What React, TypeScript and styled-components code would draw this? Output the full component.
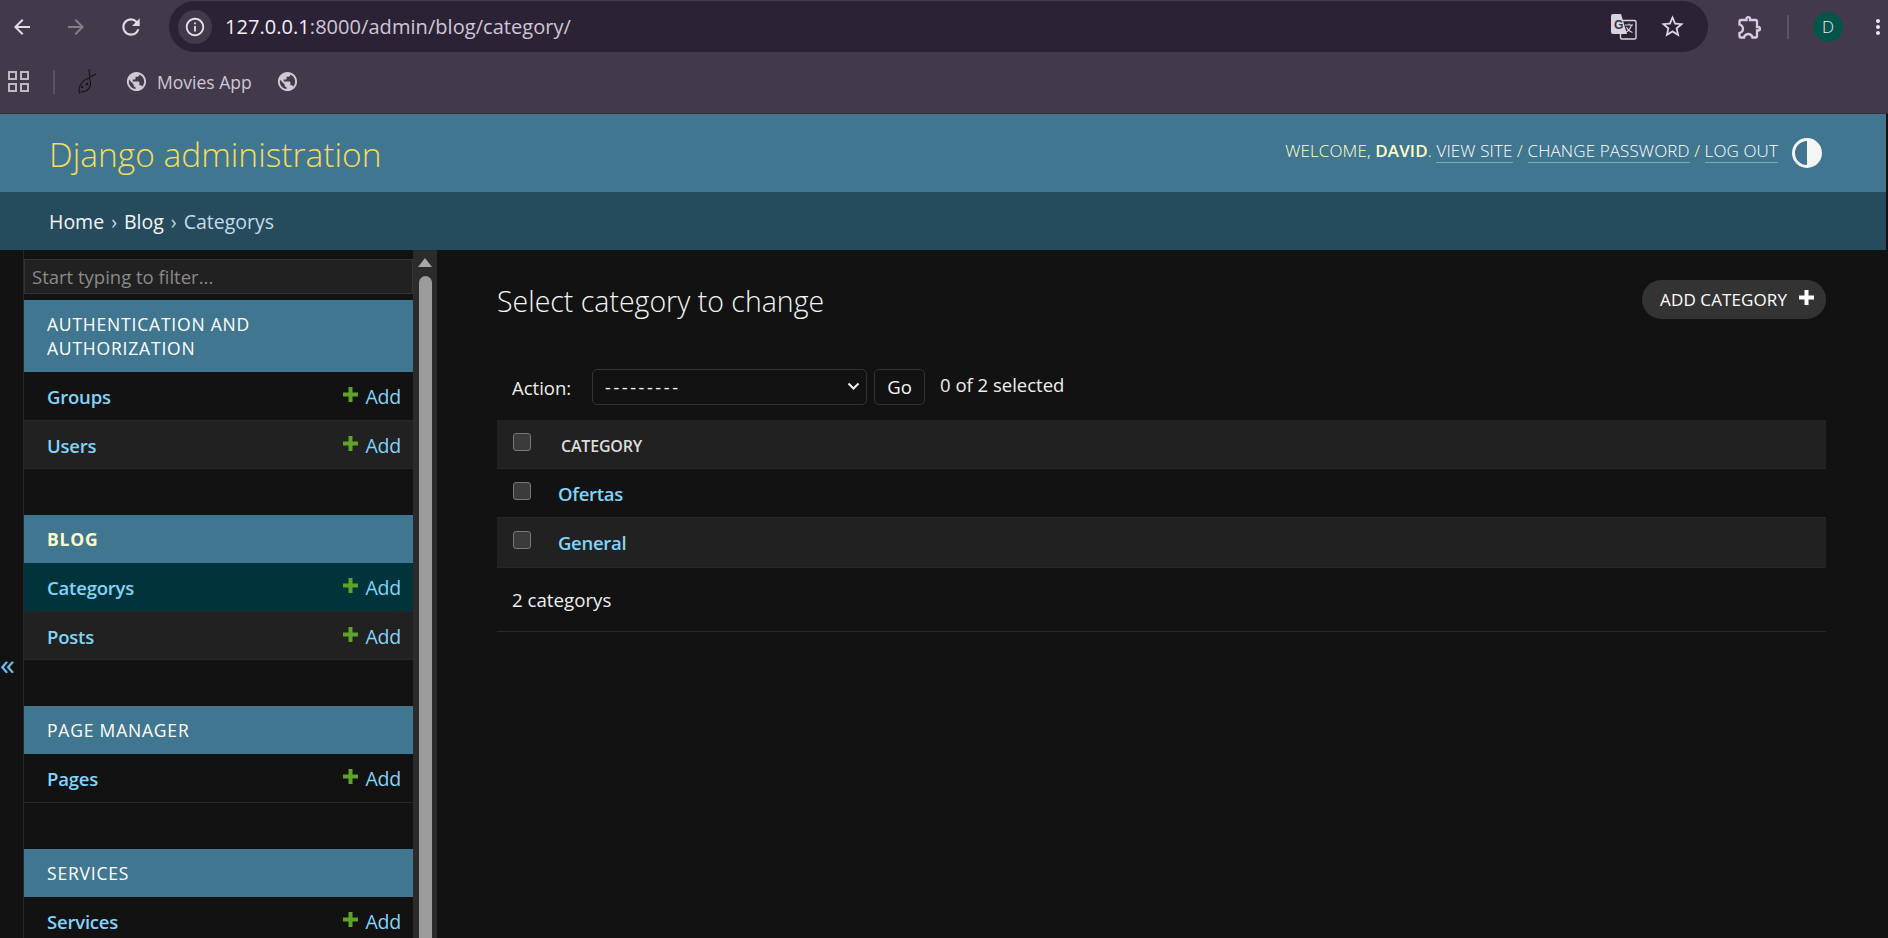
import React from "react";
import styled, { createGlobalStyle } from "styled-components";
import {
  MdArrowBack,
  MdArrowForward,
  MdRefresh,
  MdInfoOutline,
  MdStarBorder,
  MdOutlineExtension,
  MdMoreVert,
  MdPublic,
} from "react-icons/md";

const FONT = `"Open Sans", "Noto Sans", "Liberation Sans", sans-serif`;

const Global = createGlobalStyle`
  html, body { margin: 0; padding: 0; height: 100%; background: #121212; overflow: hidden; }
  #root { height: 100%; }
  * { box-sizing: border-box; }
  body { font-family: ${FONT}; }
`;

const Page = styled.div`
  width: 1888px;
  height: 938px;
  display: flex;
  flex-direction: column;
  overflow: hidden;
  background: #121212;
  color: #f5f5f5;
`;

/* ---- browser chrome ---- */
const Chrome = styled.div`
  height: 114px;
  flex: none;
  background: #423a4b;
  border-bottom: 1px solid #35303c;
  display: flex;
  flex-direction: column;
`;
const TopRow = styled.div`
  height: 53px;
  flex: none;
  display: flex;
  align-items: center;
  padding-left: 10px;
`;
const NavIcon = styled.span<{ $dim?: boolean; $w?: number }>`
  width: ${(p) => p.$w ?? 54}px;
  flex: none;
  display: flex;
  align-items: center;
  justify-content: flex-start;
  color: ${(p) => (p.$dim ? "#857c8c" : "#e3dae9")};
`;
const AddressBar = styled.div`
  margin-left: 11px;
  width: 1539px;
  height: 51px;
  flex: none;
  border-radius: 26px;
  background: #2b2335;
  display: flex;
  align-items: center;
  padding: 0 14px 0 9px;
`;
const InfoBubble = styled.span`
  width: 34px;
  height: 34px;
  border-radius: 50%;
  background: #423a4b;
  color: #e6deeb;
  display: flex;
  align-items: center;
  justify-content: center;
  flex: none;
`;
const Url = styled.span`
  margin-left: 13px;
  font-size: 20px;
  letter-spacing: 0.05px;
  color: #cfc6d6;
  flex: 1;
  b {
    font-weight: 400;
    color: #f4eef8;
  }
`;
const BarIcons = styled.span`
  display: flex;
  align-items: center;
  gap: 22px;
  color: #ddd4e3;
  margin-right: 8px;
`;
const ToolIcons = styled.div`
  display: flex;
  align-items: center;
  margin-left: 28px;
  color: #d8c9e4;
`;
const ToolSep = styled.span`
  width: 2px;
  height: 24px;
  margin: 0 24px 0 23px;
  background: #5b5264;
`;
const Avatar = styled.span`
  width: 30px;
  height: 30px;
  border-radius: 50%;
  background: #05544a;
  color: #eef;
  font-size: 17px;
  font-weight: 300;
  display: flex;
  align-items: center;
  justify-content: center;
  flex: none;
`;
const MenuDots = styled.span`
  display: flex;
  margin-left: 23px;
  color: #efe6f5;
`;
const BookmarkRow = styled.div`
  flex: 1;
  display: flex;
  align-items: center;
  padding: 0 0 3px 8px;
  color: #bfb9c6;
`;
const BarSep = styled.span`
  width: 2px;
  height: 24px;
  margin: 0 21px 0 24px;
  background: #5b5264;
`;
const Bookmark = styled.span<{ $lead?: number }>`
  display: flex;
  align-items: center;
  gap: 9px;
  font-size: 17.5px;
  color: #cfc8d6;
  margin-left: ${(p) => p.$lead ?? 27}px;
`;

/* ---- django header ---- */
const Header = styled.header`
  height: 78px;
  flex: none;
  background: #417690;
  display: flex;
  align-items: center;
  justify-content: space-between;
  padding: 0 64px 0 49px;
  margin-right: 2px;
`;
const Brand = styled.h1`
  margin: 2px 0 0;
  font-size: 33.5px;
  font-weight: 300;
  color: #f5dd5d;
`;
const UserTools = styled.div`
  display: flex;
  align-items: center;
  gap: 14px;
  font-size: 17px;
  font-weight: 300;
  letter-spacing: 0.12px;
  color: #ffc;
  text-transform: uppercase;
  strong {
    font-weight: 600;
  }
`;
const ToolsText = styled.span`
  padding-bottom: 5px;
`;
const ToolLink = styled.a`
  color: #fff;
  border-bottom: 1px solid rgba(255, 255, 255, 0.35);
`;
const Breadcrumbs = styled.nav`
  height: 58px;
  flex: none;
  background: #264b5d;
  display: flex;
  align-items: center;
  padding: 1px 0 0 49px;
  margin-right: 2px;
  font-size: 19.5px;
  color: #c4dce8;
  a {
    color: #f5f5f5;
  }
  i {
    font-style: normal;
    margin: 0 7px;
  }
`;

/* ---- body ---- */
const Body = styled.div`
  flex: 1;
  min-height: 0;
  display: flex;
`;
const ToggleColumn = styled.div`
  width: 24px;
  flex: none;
  padding-top: 396px;
  border-right: 1px solid #272727;
  font-size: 30px;
  line-height: 36px;
`;
const ToggleGlyph = styled.span`
  display: block;
  color: #6fc3ef;
`;
const Sidebar = styled.aside`
  width: 389px;
  flex: none;
  padding-top: 9px;
  overflow: hidden;
`;
const Filter = styled.input`
  display: block;
  width: 100%;
  height: 35px;
  margin: 0 0 6px;
  padding: 0 7px;
  background: #212121;
  border: 1px solid #353535;
  color: #eee;
  font: 400 18.5px ${FONT};
  outline: none;
  &::placeholder {
    color: #8a8a8a;
    opacity: 1;
  }
`;
const Section = styled.section`
  margin-bottom: 46px;
`;
const Caption = styled.div<{ $current?: boolean }>`
  background: #417690;
  padding: 12px 24px 12px 23px;
  font-size: 17.5px;
  line-height: 24px;
  letter-spacing: 0.8px;
  font-weight: ${(p) => (p.$current ? 700 : 400)};
  color: ${(p) => (p.$current ? "#ffc" : "#fff")};
  text-transform: uppercase;
`;
const ModelRow = styled.div<{ $alt?: boolean; $current?: boolean }>`
  height: 48.5px;
  display: flex;
  align-items: center;
  justify-content: space-between;
  padding: 2px 12px 0 23px;
  border-bottom: 1px solid #272727;
  background: ${(p) => (p.$current ? "#01343a" : p.$alt ? "#212121" : "#121212")};
`;
const ModelName = styled.a`
  color: #81d4fa;
  font-size: 18.5px;
  font-weight: 600;
  letter-spacing: -0.2px;
`;
const AddLink = styled.a`
  display: flex;
  align-items: center;
  gap: 7px;
  color: #81d4fa;
  font-size: 19.5px;
  letter-spacing: -0.2px;
`;
const PlusIcon = styled.svg`
  flex: none;
  margin-top: -4px;
`;
const ScrollBar = styled.div`
  width: 24px;
  flex: none;
  background: #2b2b2b;
  display: flex;
  flex-direction: column;
  align-items: center;
  padding-top: 8px;
`;
const ScrollThumb = styled.div`
  width: 13px;
  flex: 1;
  margin-top: 8px;
  background: #9b9b9b;
  border-radius: 7px 7px 0 0;
`;
const Main = styled.main`
  flex: 1;
  min-width: 0;
  padding: 24px 60px 0 60px;
`;
const TitleRow = styled.div`
  display: flex;
  align-items: flex-start;
  justify-content: space-between;
  height: 95px;
`;
const Title = styled.h2`
  margin: 7px 0 0;
  font-size: 28.5px;
  font-weight: 300;
  line-height: 40px;
  color: #f5f5f5;
`;
const AddButton = styled.a`
  display: flex;
  align-items: center;
  gap: 12px;
  height: 39px;
  margin-top: 6px;
  padding: 0 12px 0 18px;
  background: #333;
  border-radius: 20px;
  color: #fff;
  font-size: 17px;
  letter-spacing: 0.1px;
`;
const Actions = styled.div`
  display: flex;
  align-items: center;
  height: 51px;
  padding: 0 0 16px 15px;
  font-size: 18.5px;
  color: #eee;
`;
const ActionLabel = styled.span`
  width: 80px;
  flex: none;
  margin-top: 2px;
`;
const SelectWrap = styled.span`
  position: relative;
  display: block;
  width: 275px;
  height: 36px;
  flex: none;
`;
const ActionSelect = styled.select`
  appearance: none;
  display: block;
  width: 100%;
  height: 100%;
  background: #121212;
  color: #f5f5f5;
  border: 1px solid #333;
  border-radius: 5px;
  padding: 0 12px;
  font: 400 18px ${FONT};
  letter-spacing: 2.6px;
`;
const Chevron = styled.svg`
  position: absolute;
  right: 7px;
  top: 13px;
  pointer-events: none;
`;
const GoButton = styled.button`
  width: 51px;
  height: 36px;
  margin-left: 7px;
  background: #121212;
  color: #f5f5f5;
  border: 1px solid #333;
  border-radius: 5px;
  font: 400 18.5px ${FONT};
  padding: 0;
`;
const Counter = styled.span`
  margin: -5px 0 0 15px;
`;
const Row = styled.div<{ $alt?: boolean; $head?: boolean }>`
  height: ${(p) => (p.$alt ? 50 : 49)}px;
  display: flex;
  align-items: center;
  padding-left: 16px;
  border-bottom: 1px solid #272727;
  background: ${(p) => (p.$alt || p.$head ? "#212121" : "#121212")};
`;
const Check = styled.input<{ $up?: boolean }>`
  appearance: none;
  width: 18px;
  height: 18px;
  margin: ${(p) => (p.$up ? -5 : -4)}px 0 0;
  flex: none;
  background: #3b3b3b;
  border: 1px solid #777;
  border-radius: 3px;
`;
const HeadCell = styled.span`
  margin: 3px 0 0 30px;
  font-size: 16px;
  font-weight: 600;
  letter-spacing: -0.2px;
  color: #ddd;
  text-transform: uppercase;
`;
const RowLink = styled.a`
  margin-left: 27px;
  color: #81d4fa;
  font-size: 18.5px;
  font-weight: 600;
  letter-spacing: -0.3px;
`;
const Paginator = styled.div`
  height: 64px;
  display: flex;
  align-items: center;
  padding-left: 15px;
  border-bottom: 1px solid #272727;
  font-size: 18.7px;
  color: #eee;
`;
const RightGutter = styled.div`
  width: 2px;
  flex: none;
`;

const Plus = ({ size = 15, color = "#5fa225" }: { size?: number; color?: string }) => (
  <PlusIcon width={size} height={size} viewBox="0 0 15 15">
    <path d="M5.5 0h4v5.5H15v4H9.5V15h-4V9.5H0v-4h5.5z" fill={color} />
  </PlusIcon>
);

const AppsIcon = () => (
  <svg width="21" height="21" viewBox="0 0 21 21" fill="none" stroke="#bdb8c4" strokeWidth="2">
    <rect x="1" y="1" width="7" height="7" />
    <rect x="13" y="1" width="7" height="7" />
    <rect x="1" y="13" width="7" height="7" />
    <rect x="13" y="13" width="7" height="7" />
  </svg>
);

const BirdIcon = () => (
  <svg width="22" height="28" viewBox="0 0 22 28" fill="none" stroke="#17131c" strokeWidth="1.1">
    <path d="M13 1l1 9M14 9l6-3M13 10c-6 2-10 7-10 13l1 3" />
    <path d="M13 10c3 4 2 10-3 13-2 1-4 1-5 0" />
    <circle cx="11" cy="16" r="0.8" fill="#17131c" />
    <circle cx="6" cy="19" r="0.6" fill="#17131c" />
  </svg>
);

const TranslateIcon = () => (
  <svg width="26" height="26" viewBox="0 0 26 26">
    <rect x="9.5" y="6.5" width="15.5" height="18.5" rx="1.5" fill="#2b2335" stroke="#d8d3dc" strokeWidth="1.4" />
    <path d="M0 2a2 2 0 0 1 2-2h8l6 20H2a2 2 0 0 1-2-2z" fill="#d8d3dc" />
    <text x="3" y="15" fontSize="12" fontWeight="700" fill="#3a3342" fontFamily="Liberation Sans, sans-serif">
      G
    </text>
    <path d="M14 11h8M18 9.5v1.5M20.5 11c-1 3.5-3 6-6 7.5M15.5 13c1 2.5 3 4.5 6 5.5" fill="none" stroke="#d8d3dc" strokeWidth="1.1" />
  </svg>
);

const ThemeIcon = () => (
  <svg width="30" height="30" viewBox="0 0 30 30">
    <circle cx="15" cy="15" r="13.5" fill="none" stroke="#f5f5f5" strokeWidth="3" />
    <path d="M15 1a14 14 0 0 1 0 28z" fill="#f5f5f5" />
  </svg>
);

const Model = ({ name, alt, current }: { name: string; alt?: boolean; current?: boolean }) => (
  <ModelRow $alt={alt} $current={current}>
    <ModelName>{name}</ModelName>
    <AddLink>
      <Plus />
      Add
    </AddLink>
  </ModelRow>
);

export default function App() {
  return (
    <Page>
      <Global />
      <Chrome>
        <TopRow>
          <NavIcon>
            <MdArrowBack size={24} />
          </NavIcon>
          <NavIcon $dim>
            <MdArrowForward size={24} />
          </NavIcon>
          <NavIcon $w={40}>
            <MdRefresh size={26} />
          </NavIcon>
          <AddressBar>
            <InfoBubble>
              <MdInfoOutline size={22} />
            </InfoBubble>
            <Url>
              <b>127.0.0.1</b>:8000/admin/blog/category/
            </Url>
            <BarIcons>
              <TranslateIcon />
              <MdStarBorder size={27} />
            </BarIcons>
          </AddressBar>
          <ToolIcons>
            <MdOutlineExtension size={28} />
            <ToolSep />
            <Avatar>D</Avatar>
            <MenuDots>
              <MdMoreVert size={24} />
            </MenuDots>
          </ToolIcons>
        </TopRow>
        <BookmarkRow>
          <AppsIcon />
          <BarSep />
          <BirdIcon />
          <Bookmark>
            <MdPublic size={23} />
            Movies App
          </Bookmark>
          <Bookmark $lead={24}>
            <MdPublic size={23} />
          </Bookmark>
        </BookmarkRow>
      </Chrome>
      <Header>
        <Brand>Django administration</Brand>
        <UserTools>
          <ToolsText>
            Welcome, <strong>David</strong>. <ToolLink>View site</ToolLink> /{" "}
            <ToolLink>Change password</ToolLink> / <ToolLink>Log out</ToolLink>
          </ToolsText>
          <ThemeIcon />
        </UserTools>
      </Header>
      <Breadcrumbs>
        <a>Home</a>
        <i>›</i>
        <a>Blog</a>
        <i>›</i>
        Categorys
      </Breadcrumbs>
      <Body>
        <ToggleColumn>
          <ToggleGlyph>«</ToggleGlyph>
        </ToggleColumn>
        <Sidebar>
          <Filter placeholder="Start typing to filter..." />
          <Section>
            <Caption>Authentication and Authorization</Caption>
            <Model name="Groups" />
            <Model name="Users" alt />
          </Section>
          <Section>
            <Caption $current>Blog</Caption>
            <Model name="Categorys" current />
            <Model name="Posts" alt />
          </Section>
          <Section>
            <Caption>Page Manager</Caption>
            <Model name="Pages" />
          </Section>
          <Section>
            <Caption>Services</Caption>
            <Model name="Services" />
          </Section>
        </Sidebar>
        <ScrollBar>
          <svg width="14" height="10" viewBox="0 0 14 10">
            <path d="M7 0l7 9H0z" fill="#a8a8a8" />
          </svg>
          <ScrollThumb />
        </ScrollBar>
        <Main>
          <TitleRow>
            <Title>Select category to change</Title>
            <AddButton>
              ADD CATEGORY
              <Plus size={15} color="#fff" />
            </AddButton>
          </TitleRow>
          <Actions>
            <ActionLabel>Action:</ActionLabel>
            <SelectWrap>
              <ActionSelect defaultValue="">
                <option value="">---------</option>
              </ActionSelect>
              <Chevron width="13" height="9" viewBox="0 0 13 9" fill="none" stroke="#f0f0f0" strokeWidth="2">
                <path d="M1.5 1.5l5 5 5-5" />
              </Chevron>
            </SelectWrap>
            <GoButton>Go</GoButton>
            <Counter>0 of 2 selected</Counter>
          </Actions>
          <Row $head>
            <Check type="checkbox" />
            <HeadCell>Category</HeadCell>
          </Row>
          <Row>
            <Check type="checkbox" />
            <RowLink>Ofertas</RowLink>
          </Row>
          <Row $alt>
            <Check type="checkbox" $up />
            <RowLink>General</RowLink>
          </Row>
          <Paginator>2 categorys</Paginator>
        </Main>
        <RightGutter />
      </Body>
    </Page>
  );
}
